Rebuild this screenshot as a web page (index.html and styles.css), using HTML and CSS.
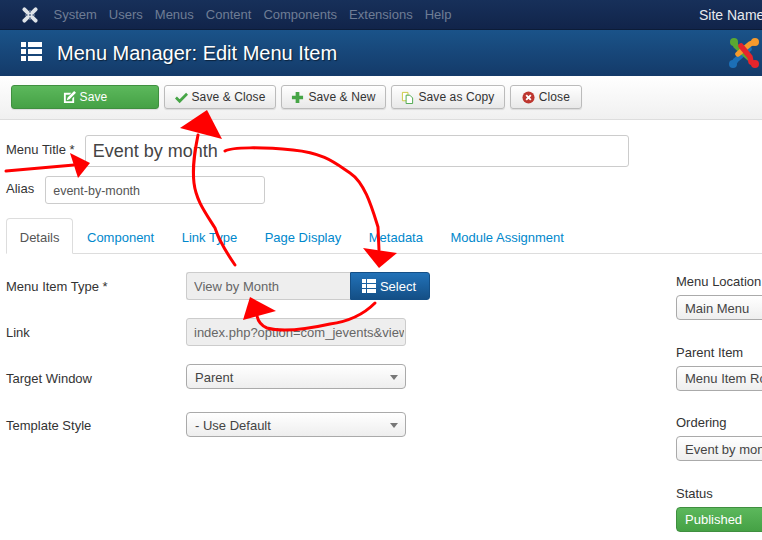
FILE: index.html
```html
<!DOCTYPE html>
<html lang="en">

<head>
    <meta charset="UTF-8">
    <meta name="viewport" content="width=device-width, initial-scale=1.0">
    <title>Menu Manager: Edit Menu Item</title>
    <link rel="stylesheet" href="styles.css">
</head>

<body>
    <nav class="navbar">
        <svg class="nav-logo" viewBox="0 0 32 32">
            <g fill="none" stroke="#dfe3e8" stroke-width="7" stroke-linecap="round">
                <path d="M6 6 L26 26"/><path d="M26 6 L6 26"/>
                <path d="M11 16 L16 11 L21 16 L16 21 Z" stroke-width="5"/>
            </g>
            <g fill="#5b6f8f">
                <circle cx="16" cy="10" r="1.800"/><circle cx="16" cy="22" r="1.800"/>
                <circle cx="10" cy="16" r="1.800"/><circle cx="22" cy="16" r="1.800"/>
                <circle cx="16" cy="16" r="1.800"/>
            </g>
        </svg>
        <ul class="nav-menu">
            <li>System</li>
            <li>Users</li>
            <li>Menus</li>
            <li>Content</li>
            <li>Components</li>
            <li>Extensions</li>
            <li>Help</li>
        </ul>
        <span class="site-name">Site Name</span>
    </nav>

    <header class="page-title">
        <svg class="title-icon" viewBox="0 0 21 20">
            <path fill="#fff" d="M0 0h5v5H0zM7 0h14v5H7zM0 7h5v5H0zM7 7h14v5H7zM0 14h5v5H0zM7 14h14v5H7z"/>
        </svg>
        <h1>Menu Manager: Edit Menu Item</h1>
        <svg class="brand" viewBox="0 0 32 32">
            <g fill="none" stroke-width="5.500" stroke-linecap="round" stroke-linejoin="round">
                <path stroke="#1c6fb7" d="M5 27 L8 23 L21 12"/>
                <path stroke="#5aa832" d="M6 5 L8 9 L21 21"/>
                <path stroke="#f69a2c" d="M27 5 L22 7 L10 17"/>
                <path stroke="#e4252c" d="M27 27 L23 25 L22 20 L13 9"/>
            </g>
            <g>
                <circle cx="6" cy="5" r="4" fill="#5aa832"/>
                <circle cx="27" cy="5" r="4" fill="#f69a2c"/>
                <circle cx="27" cy="27" r="4" fill="#e4252c"/>
                <circle cx="5" cy="27" r="4" fill="#1c6fb7"/>
            </g>
        </svg>
    </header>

    <div class="toolbar">
        <button class="btn btn-save">
            <svg class="icon" viewBox="0 0 14 14"><path fill="#fff" d="M1 2h8l-2 2H3v7h7V8l2-2v7H1zM12 0l2 2-7 7-3 1 1-3z"/></svg>
            Save
        </button>
        <button class="btn">
            <svg class="icon" viewBox="0 0 14 14"><path fill="none" stroke="#46a546" stroke-width="3" d="M1 7l4 4 8-8"/></svg>
            Save &amp; Close
        </button>
        <button class="btn">
            <svg class="icon" viewBox="0 0 14 14"><path fill="#46a546" d="M5 1h4v4h4v4H9v4H5V9H1V5h4z"/></svg>
            Save &amp; New
        </button>
        <button class="btn">
            <svg class="icon" viewBox="0 0 14 14">
                <path fill="#fff" stroke="#c9c83a" d="M1.500 1.500h6v9h-6z"/>
                <path fill="#fff" stroke="#46a546" d="M5.500 4.500h4l3 3v6h-7z"/>
            </svg>
            Save as Copy
        </button>
        <button class="btn btn-close">
            <svg class="icon" viewBox="0 0 14 14">
                <circle cx="7" cy="7" r="6.500" fill="#bd362f"/>
                <path stroke="#fff" stroke-width="2" d="M4.500 4.500l5 5M9.500 4.500l-5 5"/>
            </svg>
            Close
        </button>
    </div>

    <main class="content">
        <div class="title-row">
            <label>Menu Title <span class="req">*</span></label>
            <input class="input input-title" type="text" value="Event by month">
        </div>
        <div class="alias-row">
            <label>Alias</label>
            <input class="input input-alias" type="text" value="event-by-month">
        </div>

        <ul class="tabs">
            <li class="active">Details</li>
            <li>Component</li>
            <li>Link Type</li>
            <li>Page Display</li>
            <li>Metadata</li>
            <li>Module Assignment</li>
        </ul>

        <div class="columns">
            <div class="fields">
                <div class="field field-type">
                    <label>Menu Item Type *</label>
                    <div class="input-group">
                        <input class="input readonly" type="text" value="View by Month" readonly>
                        <button class="btn-select">
                            <svg class="icon icon-list" viewBox="0 0 14 14"><path fill="#fff" d="M0 0h4v4H0zM5 0h9v4H5zM0 5h4v4H0zM5 5h9v4H5zM0 10h4v4H0zM5 10h9v4H5z"/></svg>
                            Select
                        </button>
                    </div>
                </div>
                <div class="field field-link">
                    <label>Link</label>
                    <input class="input readonly control input-link" type="text" value="index.php?option=com_jevents&amp;view=month" readonly>
                </div>
                <div class="field field-target">
                    <label>Target Window</label>
                    <div class="select control">Parent<i class="caret"></i></div>
                </div>
                <div class="field field-style">
                    <label>Template Style</label>
                    <div class="select control">- Use Default<i class="caret"></i></div>
                </div>
            </div>

            <aside class="side">
                <label>Menu Location</label>
                <div class="select">Main Menu</div>
                <label>Parent Item</label>
                <div class="select">Menu Item Root</div>
                <label>Ordering</label>
                <div class="select">Event by month</div>
                <label>Status</label>
                <div class="select select-green">Published</div>
            </aside>
        </div>
    </main>

    <!-- hand drawn arrows on top of the screenshot -->
    <svg class="arrows" viewBox="0 0 762 540">
        <g fill="none" stroke="#f00" stroke-width="3" stroke-linecap="round">
            <path d="M6 171 L74 165"/>
            <path d="M235 265 C226 252 219 240 215 228 C205 212 196 200 194 183 C192 166 195 150 198 135"/>
            <path d="M225 151 C232 147 262 147 293 150 S335 163 350 173 S372 208 378 227 L379 250"/>
            <path d="M375 303 C362 316 345 322 330 324 C312 328 285 333 267 328 C260 325 258 321 257 316"/>
        </g>
        <g fill="#f00">
            <path d="M70 153 L90 163 L78 178 Z"/>
            <path d="M180 128 L207 110 L222 139 Z"/>
            <path d="M363 248 L397 253 L379 268 Z"/>
            <path d="M250 297 L276 311 L243 320 Z"/>
        </g>
    </svg>
</body>

</html>
```

FILE: styles.css
```css
html, body {
    margin: 0;
    height: 540px;
    overflow: hidden;
}

body {
    position: relative;
    font-family: "Liberation Sans", Arial, sans-serif;
    font-size: 13px;
    color: #333;
    background: #fff;
}

label {
    color: #333;
}

/* top bar */
.navbar {
    display: flex;
    align-items: center;
    height: 29px;
    background: linear-gradient(#17305a, #11244a);
    border-bottom: 1px solid #0c1c38;
}

.nav-logo {
    width: 18px;
    height: 18px;
    margin-left: 21px;
}

.nav-menu {
    display: flex;
    gap: 12px;
    margin: 0 0 0 14.500px;
    padding: 0;
    list-style: none;
    font-size: 13px;
    color: #6f7d95;
}

.site-name {
    margin-left: auto;
    margin-right: -6px;
    width: 69px;
    white-space: nowrap;
    font-size: 14px;
    color: #e6e9ee;
}

/* blue title */
.page-title {
    display: flex;
    align-items: center;
    height: 46px;
    background: linear-gradient(#1a5389, #143a69);
}

.title-icon {
    width: 21px;
    height: 20px;
    margin: -3px 0 0 21px;
}

.page-title h1 {
    margin: 1px 0 0 15px;
    font-size: 20px;
    font-weight: normal;
    color: #fff;
    text-shadow: 1px 1px 1px rgba(0, 0, 0, 0.5);
}

.brand {
    width: 32px;
    height: 32px;
    margin-left: auto;
    margin-right: 2px;
}

/* toolbar */
.toolbar {
    display: flex;
    gap: 5px;
    height: 44px;
    padding: 9px 0 0 11px;
    box-sizing: border-box;
    background: linear-gradient(#fff, #f0f0f0);
    border-bottom: 1px solid #ddd;
}

.btn {
    display: flex;
    align-items: center;
    justify-content: center;
    gap: 4px;
    height: 24px;
    padding: 0 9.500px;
    font-family: inherit;
    font-size: 12px;
    letter-spacing: 0.1px;
    color: #333;
    background: linear-gradient(#fff, #e8e8e8);
    border: 1px solid #bbb;
    border-radius: 3px;
    box-shadow: 0 1px 1px rgba(0, 0, 0, 0.1);
}

.btn-save {
    width: 148px;
    color: #fff;
    background: linear-gradient(#5cb85c, #45a145);
    border-color: #3f8f3f;
}

.btn-close {
    width: 72px;
}

.icon {
    width: 13px;
    height: 13px;
    flex: none;
}

.icon-list {
    width: 14px;
    height: 14px;
}

/* form */
.content {
    width: 900px;
    padding: 15px 0 0 6px;
}

.input {
    box-sizing: border-box;
    font-family: inherit;
    font-size: 13px;
    color: #555;
    padding: 0 7px;
    background: #fff;
    border: 1px solid #ccc;
    border-radius: 3px;
    outline: none;
}

.title-row,
.alias-row {
    display: flex;
    align-items: center;
}

.title-row label,
.alias-row label {
    padding-bottom: 4px;
}

.input-title {
    width: 544px;
    height: 32px;
    margin-left: 10px;
    font-size: 18px;
    color: #444;
}

.alias-row {
    margin-top: 9px;
}

.input-alias {
    width: 220px;
    height: 28px;
    margin-left: 11px;
    padding-top: 1px;
    font-size: 12.500px;
}

/* tabs */
.tabs {
    display: flex;
    width: 756px;
    height: 36px;
    margin: 14px 0 0;
    padding: 0;
    box-sizing: border-box;
    list-style: none;
    border-bottom: 1px solid #ddd;
}

.tabs li {
    box-sizing: border-box;
    height: 36px;
    padding: 11px 12.750px 0;
    color: #0088cc;
    font-size: 13px;
    border: 1px solid transparent;
}

.tabs .active {
    color: #555;
    background: #fff;
    border-color: #ddd #ddd #fff;
    border-radius: 4px 4px 0 0;
}

.columns {
    display: flex;
    padding-top: 18px;
}

.fields {
    width: 670px;
}

.field {
    display: flex;
    align-items: center;
}

.field label {
    width: 180px;
    flex: none;
}

.field-link {
    margin-top: 18px;
}

.input-link {
    padding-right: 1px;
}

.field-target {
    margin-top: 18px;
}

.field-target label {
    padding-top: 4px;
}

.field-style {
    margin-top: 23px;
}

.field-style label {
    padding-top: 2px;
}

.input-group {
    display: flex;
}

.input-group .input {
    width: 164px;
    height: 28px;
    border-radius: 3px 0 0 3px;
    border-right: 0;
}

.readonly {
    background: #eee;
    color: #666;
}

.control {
    width: 220px;
}

input.control {
    height: 28px;
}

.btn-select {
    display: flex;
    align-items: center;
    justify-content: center;
    gap: 4px;
    width: 80px;
    height: 28px;
    padding: 0 2px 0 0;
    font-family: inherit;
    font-size: 13px;
    color: #fff;
    background: linear-gradient(#2272b8, #144f86);
    border: 1px solid #144f86;
    border-radius: 0 3px 3px 0;
}

.select {
    position: relative;
    box-sizing: border-box;
    height: 25px;
    padding: 4.500px 8px 0;
    font-size: 13px;
    color: #444;
    background: linear-gradient(#fff, #eee);
    border: 1px solid #aaa;
    border-radius: 4px;
}

.caret {
    position: absolute;
    top: 10px;
    right: 7px;
    border-style: solid;
    border-width: 5px 4px 0;
    border-color: #777 transparent transparent;
}

.side {
    display: flex;
    flex-direction: column;
    width: 150px;
    padding-top: 2px;
}

.side .select {
    margin: 6px 0 24.500px;
}

.select-green {
    color: #fff;
    background: linear-gradient(#5cb85c, #45a145);
    border-color: #3f8f3f;
}

.arrows {
    position: absolute;
    top: 0;
    left: 0;
    width: 762px;
    height: 540px;
    pointer-events: none;
}
```
